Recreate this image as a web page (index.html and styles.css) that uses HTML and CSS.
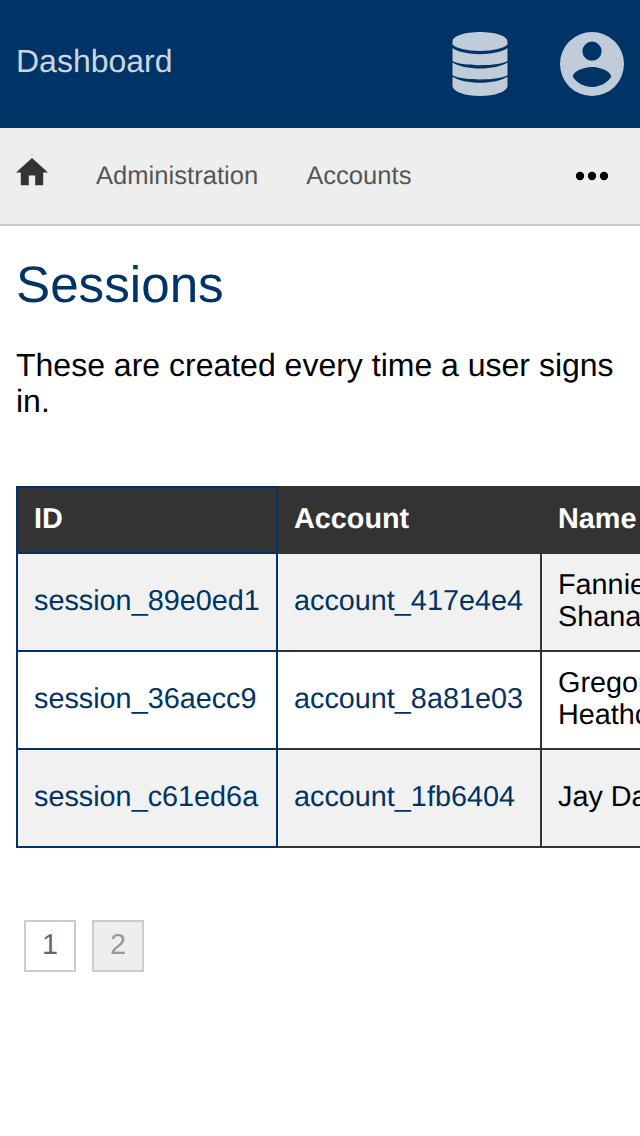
FILE: index.html
```html
<!DOCTYPE html>
<html lang="en">
<head>
<meta charset="utf-8">
<title>Sessions</title>
<link rel="stylesheet" href="styles.css">
</head>
<body>
<header class="topbar">
  <a class="brand">Dashboard</a>
  <div class="actions">
    <svg class="icon-db" viewBox="0 0 56 64"><path d="M28 0C43 0 55.500 4 55.500 9.500V12.500C53 16 41 19 28 19S3 16 .5 12.500V9.500C.5 4 13 0 28 0ZM.5 16C6 20 17 22.200 28 22.200S50 20 55.500 16V29C51 31.500 41 33.200 28 33.200S5 31.500 .5 29ZM.5 30.500C6 34.300 17 36.500 28 36.500S50 34.300 55.500 30.500V43.200C51 45.700 41 47.400 28 47.400S5 45.700 .5 43.200ZM.5 44.700C6 48.500 17 50.700 28 50.700S50 48.500 55.500 44.700V54.500C54 60 43 64 28 64S2 60 .5 54.500Z"/></svg>
    <svg class="icon-user" viewBox="2 2 20 20"><path d="M12 19.200C9.500 19.200 7.290 17.920 6 16C6.030 14 10 12.900 12 12.900C14 12.900 17.970 14 18 16C16.710 17.920 14.500 19.200 12 19.200M12 5A3 3 0 0 1 15 8A3 3 0 0 1 12 11A3 3 0 0 1 9 8A3 3 0 0 1 12 5M12 2A10 10 0 0 0 2 12A10 10 0 0 0 12 22A10 10 0 0 0 22 12A10 10 0 0 0 12 2Z"/></svg>
  </div>
</header>
<nav class="crumbs">
  <svg class="icon-home" viewBox="2 3 20 17"><path d="M10 20V14H14V20H19V12H22L12 3L2 12H5V20H10Z"/></svg>
  <a>Administration</a>
  <a>Accounts</a>
  <svg class="icon-more" viewBox="0 0 32 8"><circle cx="4" cy="4" r="4.200"/><circle cx="16" cy="4" r="4.200"/><circle cx="28" cy="4" r="4.200"/></svg>
</nav>
<main class="content">
  <h1>Sessions</h1>
  <p class="intro">These are created every time a user signs in.</p>
  <div class="table-scroll">
    <table class="sessions">
      <colgroup><col class="col-id"><col class="col-account"><col class="col-name"></colgroup>
      <thead><tr><th class="key">ID</th><th>Account</th><th>Name</th></tr></thead>
      <tbody>
        <tr><td class="key"><a>session_89e0ed1</a></td><td><a>account_417e4e4</a></td><td>Fannie<br>Shanahan</td></tr>
        <tr><td class="key"><a>session_36aecc9</a></td><td><a>account_8a81e03</a></td><td>Gregory<br>Heathcote</td></tr>
        <tr><td class="key"><a>session_c61ed6a</a></td><td><a>account_1fb6404</a></td><td>Jay Daniel</td></tr>
      </tbody>
    </table>
  </div>
  <div class="pages"><a class="page">1</a><a class="page page-off">2</a></div>
</main>
</body>
</html>
```
FILE: styles.css
```css
* { box-sizing: border-box; }
body {
  margin: 0;
  min-height: 1136px;
  overflow-x: hidden;
  background: #fff;
  color: #000;
  font: 32px/36px "Liberation Sans", Arial, sans-serif;
  text-rendering: geometricPrecision;
}
svg { display: block; flex: none; overflow: visible; }
.topbar {
  display: flex;
  justify-content: space-between;
  height: 128px;
  padding: 32px 16px;
  background: #003366;
}
.brand { padding-top: 11px; color: #ccd6e0; }
.actions { display: flex; gap: 52px; fill: #c0ccd9; }
.icon-db { width: 56px; height: 64px; }
.icon-user { width: 64px; height: 64px; }
.crumbs {
  display: flex;
  align-items: center;
  gap: 48px;
  height: 98px;
  padding: 0 32px 0 16px;
  border-bottom: 2px solid #ccc;
  background: #eee;
  color: #555;
  font-size: 25.6px;
}
.icon-home { width: 32px; height: 27.2px; margin-top: -8px; fill: #333; }
.icon-more { width: 32px; height: 8px; margin-left: auto; fill: #000; }
.content { padding: 0 16px; }
h1 {
  margin: 29px 0 32px;
  color: #036;
  font-size: 51.2px;
  font-weight: 400;
  line-height: 60px;
}
.intro { margin: 0 0 67px; }
.table-scroll { margin-right: -16px; overflow: hidden; }
.sessions {
  width: 742px;
  table-layout: fixed;
  border-collapse: collapse;
  font-size: 28.8px;
  line-height: 32px;
}
.col-id { width: 260px; }
.col-account { width: 264px; }
.sessions th, .sessions td {
  padding: 0 16px 2px;
  border: 2px solid #333;
  text-align: left;
  vertical-align: middle;
}
.sessions th { height: 66px; background: #333; color: #fff; }
.sessions td { height: 98px; }
.sessions .key { border-color: #036; }
.sessions tbody tr:nth-child(odd) { background: #f1f1f1; }
.sessions a { color: #036; }
.pages { display: flex; gap: 16px; padding: 72px 8px 0; }
.page {
  width: 52px;
  height: 52px;
  border: 2px solid #ccc;
  color: #666;
  font-size: 28.8px;
  line-height: 46px;
  text-align: center;
}
.page-off { background: #eee; color: #999; }
```
